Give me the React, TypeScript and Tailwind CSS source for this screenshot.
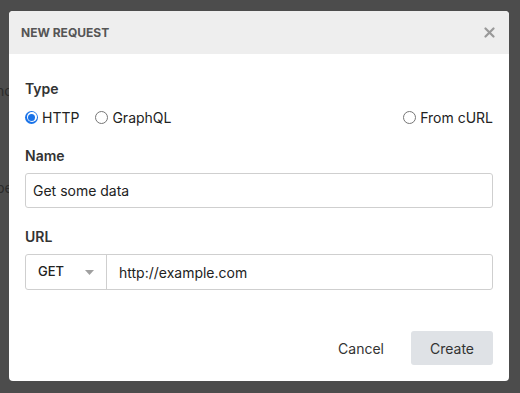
import React from 'react';

const Radio: React.FC<{ checked?: boolean; label: string }> = ({ checked, label }) => (
  <label className="flex items-center gap-[4px] cursor-pointer">
    {checked ? (
      <span className="w-[13px] h-[13px] rounded-full bg-[#1a73e8] flex items-center justify-center">
        <span className="w-[10px] h-[10px] rounded-full bg-white flex items-center justify-center">
          <span className="w-[7px] h-[7px] rounded-full bg-[#1a73e8]" />
        </span>
      </span>
    ) : (
      <span className="w-[13px] h-[13px] rounded-full border border-[#767676] bg-white" />
    )}
    <span className="text-[14px] text-[#222]">{label}</span>
  </label>
);

export default function App() {
  return (
    <div className="relative h-[393px] w-[520px] overflow-hidden bg-[#4c4c4c] font-['Inter',sans-serif]">
      {/* app behind the overlay */}
      <div className="pt-[80px] pl-0 text-[14px] text-[#2b2b2b] -ml-[4px]">
        <div>nce</div>
        <div className="mt-[76px]">pe</div>
      </div>

      {/* modal */}
      <div className="absolute left-[9px] top-[11px] w-[500px] rounded-[4px] bg-white overflow-hidden">
        <div className="h-[43px] bg-[#eeeeee] flex items-center justify-between pl-[12px] pr-[14px]">
          <span className="text-[12px] font-bold text-[#555]">NEW REQUEST</span>
          <svg width="11" height="11" viewBox="0 0 11 11" className="text-[#999]">
            <path d="M1.5 1.5 L9.5 9.5 M9.5 1.5 L1.5 9.5" stroke="currentColor" strokeWidth="2.2" strokeLinecap="round" />
          </svg>
        </div>

        <div className="px-[16px] pt-[25px] pb-[16px] flex flex-col">
          <div className="h-[20px] leading-[20px] text-[14px] font-semibold text-[#333]">Type</div>
          <div className="mt-[8px] h-[20px] flex items-center">
            <Radio checked label="HTTP" />
            <div className="ml-[16px]">
              <Radio label="GraphQL" />
            </div>
            <div className="ml-auto">
              <Radio label="From cURL" />
            </div>
          </div>

          <div className="mt-[19px] h-[20px] leading-[20px] text-[14px] font-semibold text-[#333]">Name</div>
          <div className="mt-[7px] h-[35px] border border-[#cfcfcf] rounded-[3px] flex items-center px-[7px] text-[14px] text-[#222]">
            Get some data
          </div>

          <div className="mt-[19px] h-[20px] leading-[20px] text-[14px] font-semibold text-[#333]">URL</div>
          <div className="mt-[7px] h-[36px] border border-[#cfcfcf] rounded-[3px] flex">
            <div className="w-[81px] border-r border-[#cfcfcf] flex items-center pl-[12px] pr-[12px] justify-between">
              <span className="text-[13px] font-medium text-[#222]">GET</span>
              <svg width="9" height="5" viewBox="0 0 9 5">
                <path d="M0 0 L9 0 L4.5 5 Z" fill="#a0a0a0" />
              </svg>
            </div>
            <div className="flex-1 flex items-center pl-[12px] text-[14px] text-[#222]">http://example.com</div>
          </div>

          <div className="mt-[41px] h-[34px] flex items-center justify-end">
            <button className="text-[14px] text-[#333] mr-[27px]">Cancel</button>
            <button className="h-[34px] w-[82px] rounded-[3px] bg-[#dfe2e6] text-[14px] text-[#333]">Create</button>
          </div>
        </div>
      </div>
    </div>
  );
}
